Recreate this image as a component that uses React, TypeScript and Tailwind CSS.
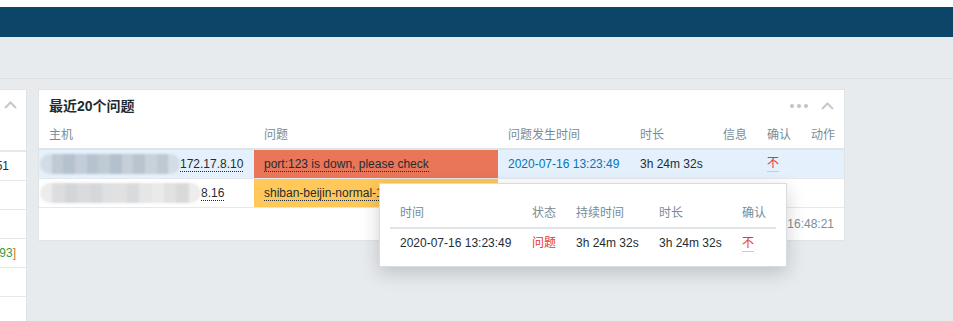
import React from "react";

const row1Blur = ["#d3dce5", "#bfcad5", "#b4c2ce", "#c3cdd7", "#b6c3cf", "#c0cad3", "#b3c1cd", "#c6cfd8", "#b9c4ce", "#c9d2da", "#bfc9d2", "#d3dbe3"];
const row2Blur = ["#ececed", "#dcdddf", "#d3d5d7", "#dadbdd", "#d5d7d9", "#dfe0e1", "#e1e1e2", "#d8dadb", "#e6e6e6", "#eaeaea", "#e1e1e2", "#d9d9da", "#ededed"];

function Mosaic({ colors, width }: { colors: string[]; width: number }) {
  return (
    <div className="-ml-[9px] flex h-[20px] shrink-0 overflow-hidden rounded-[10px] blur-[1px]" style={{ width }}>
      {colors.map((c, i) => (
        <div key={i} className="h-full flex-1" style={{ background: c }} />
      ))}
    </div>
  );
}

function Chevron() {
  return (
    <svg width="13" height="8" viewBox="0 0 13 8" className="block">
      <polyline points="1,7 6.5,1.5 12,7" fill="none" stroke="#c2cad0" strokeWidth="2" />
    </svg>
  );
}

const No = () => (
  <span className="inline-block border-b border-[#c7ccd0] leading-[15px] text-[#e33734]">不</span>
);

const cols = "grid grid-cols-[215px_244px_132px_83px_44px_44px_43px]";
const pcols = "grid grid-cols-[132px_44px_83px_83px_44px]";

export default function App() {
  return (
    <div className="relative h-[321px] w-[953px] overflow-hidden bg-[#e8ebee] font-['Liberation_Sans','Noto_Sans_CJK_SC',sans-serif] text-[12px] text-[#1f2c33]">
      <div className="h-[7px] bg-white" />
      <div className="h-[30px] bg-[#0b4669]" />
      <div className="h-[42px] border-b border-[#dce1e4]" />
      <div className="flex items-start gap-[11px] pt-[10px]">
        {/* left panel */}
        <div className="h-[240px] w-[27px] shrink-0 border-r border-t border-[#dfe4e7] bg-white">
          <div className="h-[60px] pl-[4px] pt-[11px]">
            <Chevron />
          </div>
          <div className="h-[2px] bg-[#e4e8eb]" />
          {["51", "", "", "93]", "", ""].map((t, i) => (
            <div key={i} className="flex h-[29px] items-center overflow-hidden border-b border-[#e6e9ec]">
              <div className={`flex shrink-0 justify-end whitespace-nowrap ${i === 3 ? "w-[16px]" : "w-[9px]"}`}>
                {i === 3 ? (
                  <span>
                    <span className="text-[#3a9a3f]">93</span>
                    <span className="text-[#c77a1f]">]</span>
                  </span>
                ) : (
                  <span className="text-[#1f2c33]">{t}</span>
                )}
              </div>
            </div>
          ))}
        </div>

        {/* main panel */}
        <div className="relative w-[807px] shrink-0 border border-[#dfe4e7] bg-white">
          <div className="flex h-[31px] items-center justify-between px-[10px] pt-[1px]">
            <div className="text-[14px] font-bold text-[#1f2c33]">最近20个问题</div>
            <div className="flex items-center gap-[13px]">
              <div className="flex gap-[3px]">
                <span className="h-[4px] w-[4px] rounded-full bg-[#bcc5cc]" />
                <span className="h-[4px] w-[4px] rounded-full bg-[#bcc5cc]" />
                <span className="h-[4px] w-[4px] rounded-full bg-[#bcc5cc]" />
              </div>
              <Chevron />
            </div>
          </div>
          <div className={`${cols} h-[29px] items-center border-b-2 border-[#dfe4e7] pt-[1px] text-[#768d99]`}>
            <div className="pl-[10px]">主机</div>
            <div className="pl-[10px]">问题</div>
            <div className="pl-[10px]">问题发生时间</div>
            <div className="pl-[10px]">时长</div>
            <div className="pl-[10px]">信息</div>
            <div className="pl-[10px]">确认</div>
            <div className="pl-[10px]">动作</div>
          </div>
          {/* row 1 */}
          <div className={`${cols} h-[29px] border-b border-[#e6e9ec] bg-[#e4f0fb]`}>
            <div className="flex items-center overflow-hidden whitespace-nowrap pl-[10px]">
              <Mosaic colors={row1Blur} width={140} />
              <span className="border-b border-dotted border-[#1f2c33] leading-[14px]">172.17.8.10</span>
            </div>
            <div className="flex items-center overflow-hidden whitespace-nowrap bg-[#e97659] pl-[10px]">
              <span className="border-b border-dotted border-[#1f2c33] leading-[14px]">port:123 is down, please check</span>
            </div>
            <div className="flex items-center pl-[10px] text-[#0275b8]">2020-07-16 13:23:49</div>
            <div className="flex items-center pl-[10px]">3h 24m 32s</div>
            <div />
            <div className="flex items-center pl-[10px]">
              <No />
            </div>
            <div />
          </div>
          {/* row 2 */}
          <div className={`${cols} h-[29px] border-b border-[#e6e9ec]`}>
            <div className="flex items-center overflow-hidden whitespace-nowrap pl-[10px]">
              <Mosaic colors={row2Blur} width={161} />
              <span className="border-b border-dotted border-[#1f2c33] leading-[14px]">8.16</span>
            </div>
            <div className="flex items-center overflow-hidden whitespace-nowrap bg-[#ffc859] pl-[10px]">
              <span className="border-b border-dotted border-[#1f2c33] leading-[14px]">shiban-beijin-normal-172.17.8.16 is down</span>
            </div>
            <div className="flex items-center pl-[10px] text-[#0275b8]">2020-07-16 13:20:11</div>
            <div className="flex items-center pl-[10px]">3h 28m 10s</div>
            <div />
            <div className="flex items-center pl-[10px]">
              <No />
            </div>
            <div />
          </div>
          {/* footer */}
          <div className="flex h-[32px] items-center justify-end pr-[10px] text-[#7d8d97]">16:48:21</div>

          {/* popup */}
          <div className="absolute left-[340px] top-[93px] w-[408px] border border-[#d6dce0] bg-white px-[10px] pb-[10px] pt-[15px] shadow-[0_6px_18px_rgba(0,0,0,0.18)]">
            <div className={`${pcols} h-[30px] items-center border-b-2 border-[#dfe4e7] text-[#768d99]`}>
              <div className="pl-[10px]">时间</div>
              <div className="pl-[10px]">状态</div>
              <div className="pl-[10px]">持续时间</div>
              <div className="pl-[10px]">时长</div>
              <div className="pl-[10px]">确认</div>
            </div>
            <div className={`${pcols} h-[27px] items-center`}>
              <div className="pl-[10px]">2020-07-16 13:23:49</div>
              <div className="pl-[10px] text-[#e33734]">问题</div>
              <div className="pl-[10px]">3h 24m 32s</div>
              <div className="pl-[10px]">3h 24m 32s</div>
              <div className="pl-[10px]">
                <No />
              </div>
            </div>
          </div>
        </div>
      </div>
    </div>
  );
}
